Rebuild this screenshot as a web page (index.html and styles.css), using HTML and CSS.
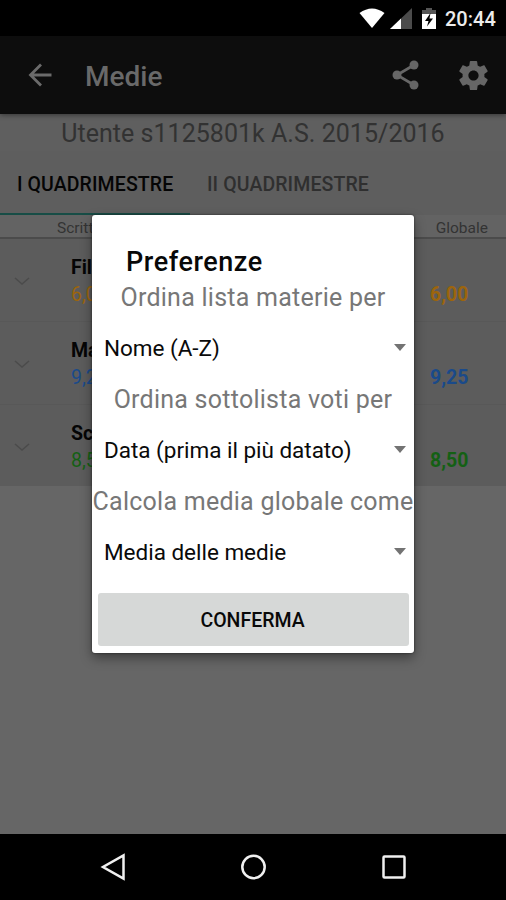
FILE: index.html
```html
<!DOCTYPE html>
<html lang="it">
<head>
<meta charset="utf-8">
<title>Medie</title>
<link rel="stylesheet" href="styles.css">
</head>
<body>
<div class="screen">
  <div class="status">
    <svg class="wifi" width="26" height="21" viewBox="0 0 26 21"><path d="M0.500 5Q13-4 25.500 5L13 20Z" fill="#fff"/></svg>
    <svg class="signal" width="22" height="21" viewBox="0 0 22 21"><path d="M0 21L22 0V21Z" fill="#4b4b4b"/><path d="M0 21L11 10.500V21Z" fill="#fff"/></svg>
    <svg class="battery" width="14" height="21" viewBox="0 0 14 21"><path d="M0 2H4V0H10V2H14V7H0Z" fill="#555"/><path d="M0 6H14V21H0Z" fill="#fff"/><path d="M8.500 5L3 13H6.500L5 18.500L11 10.500H7.500Z" fill="#000"/></svg>
    <span class="clock">20:44</span>
  </div>
  <header class="appbar">
    <svg class="back" width="24" height="24" viewBox="0 0 24 24" fill="none" stroke="#6b6b6b" stroke-width="2.800"><path d="M23.500 12H3M13 1.500L2.500 12L13 22.500"/></svg>
    <h1 class="title">Medie</h1>
    <svg class="share" width="28" height="30" viewBox="0 0 28 30" fill="#666"><path d="M22 5L5 15L22 25" fill="none" stroke="#666" stroke-width="2.700"/><circle cx="22" cy="5" r="4.500"/><circle cx="5" cy="15" r="4.500"/><circle cx="22" cy="25" r="4.500"/></svg>
    <svg class="gear" width="35" height="35" viewBox="0 0 24 24" fill="#666"><path d="M19.430 12.980c.04-.32.070-.64.070-.98s-.03-.66-.07-.98l2.110-1.650c.19-.15.240-.42.120-.64l-2-3.460c-.12-.22-.39-.3-.61-.22l-2.490 1c-.52-.4-1.080-.73-1.690-.98l-.38-2.650C14.460 2.180 14.250 2 14 2h-4c-.25 0-.46.18-.49.42l-.38 2.650c-.61.25-1.170.59-1.690.98l-2.490-1c-.23-.09-.49 0-.61.22l-2 3.460c-.13.22-.07.49.12.64l2.110 1.650c-.04.32-.07.65-.07.98s.03.66.07.98l-2.110 1.650c-.19.15-.24.42-.12.64l2 3.460c.12.22.39.3.61.22l2.490-1c.52.4 1.080.73 1.690.98l.38 2.650c.03.24.24.42.49.42h4c.25 0 .46-.18.49-.42l.38-2.650c.61-.25 1.170-.59 1.690-.98l2.490 1c.23.09.49 0 .61-.22l2-3.460c.12-.22.07-.49-.12-.64l-2.110-1.650zM12 15.500c-1.930 0-3.500-1.570-3.500-3.500s1.570-3.500 3.500-3.500 3.500 1.570 3.500 3.500-1.570 3.500-3.500 3.500z"/></svg>
  </header>
  <main class="content">
    <div class="user"><span>Utente s1125801k A.S. 2015/2016</span></div>
    <nav class="tabs"><div class="tab active"><span>I QUADRIMESTRE</span></div><div class="tab"><span>II QUADRIMESTRE</span></div></nav>
    <div class="columns"><span>Scritt</span><span>Globale</span></div>
    <div class="list">
      <div class="row"><svg class="chevron" width="16" height="9" viewBox="0 0 16 9"><path d="M1 1L8 7L15 1"/></svg><div class="subject"><b>Fil</b><span class="orange">6,0</span></div><strong class="orange">6,00</strong></div>
      <div class="row"><svg class="chevron" width="16" height="9" viewBox="0 0 16 9"><path d="M1 1L8 7L15 1"/></svg><div class="subject"><b>Ma</b><span class="blue">9,2</span></div><strong class="blue">9,25</strong></div>
      <div class="row"><svg class="chevron" width="16" height="9" viewBox="0 0 16 9"><path d="M1 1L8 7L15 1"/></svg><div class="subject"><b>Sc</b><span class="green">8,5</span></div><strong class="green">8,50</strong></div>
    </div>
  </main>
  <footer class="navbar">
    <svg width="28" height="28" viewBox="0 0 28 28"><path d="M25.500 2.500V25.500L5 14Z"/></svg>
    <svg width="28" height="28" viewBox="0 0 28 28"><circle cx="14.500" cy="14" r="11.200"/></svg>
    <svg width="28" height="28" viewBox="0 0 28 28"><rect x="3.500" y="3.500" width="21" height="21" rx="1"/></svg>
  </footer>
  <section class="dialog">
    <h2 class="heading"><span>Preferenze</span></h2>
    <div class="label"><span>Ordina lista materie per</span></div>
    <div class="select"><span>Nome (A-Z)</span><i class="arrow"></i></div>
    <div class="label"><span>Ordina sottolista voti per</span></div>
    <div class="select"><span>Data (prima il più datato)</span><i class="arrow"></i></div>
    <div class="label"><span>Calcola media globale come</span></div>
    <div class="select"><span>Media delle medie</span><i class="arrow"></i></div>
    <button class="confirm"><span>CONFERMA</span></button>
  </section>
</div>
</body>
</html>
```
FILE: styles.css
```css
* { box-sizing: border-box; }
body { margin: 0; font-family: Roboto, sans-serif; }
.screen { position: relative; width: 506px; height: 900px; display: flex; flex-direction: column; overflow: hidden; background: #666; }
.status { height: 36px; background: #000; display: flex; align-items: flex-start; padding-left: 359px; }
.status svg { margin-top: 8px; flex: none; }
.signal { margin-left: 5px; }
.battery { margin-left: 10px; }
.clock { margin-left: 9px; color: #ececec; font-size: 20px; font-weight: 500; line-height: 38px; white-space: nowrap; }
.appbar { height: 78px; background: #0d0d0d; display: flex; align-items: center; padding-left: 28px; box-shadow: 0 1px 5px rgba(0,0,0,.45); z-index: 1; }
.title { margin: 3px 0 0 33px; width: 307px; color: #696969; font-size: 28px; font-weight: 500; line-height: 36px; }
.gear { margin-left: 36px; }
.content { flex: 1; }
.user { height: 37px; background: #5f5f5f; color: #323232; font-size: 25px; line-height: 40px; letter-spacing: .03px; text-align: center; white-space: nowrap; }
.tabs { height: 64px; display: flex; background: #5e5e5e; white-space: nowrap; }
.tab { width: 190px; padding-left: 17px; font-size: 19.500px; font-weight: 500; line-height: 67px; letter-spacing: .1px; color: #2f2f2f; }
.tab.active { height: 64px; color: #050505; border-bottom: 2px solid #174d46; }
.columns { height: 24px; display: flex; justify-content: space-between; padding: 0 18px 0 57px; border-bottom: 2px solid #4b4b4b; background: #636363; color: #333; font-size: 15.500px; line-height: 26px; }
.list { background: #5c5c5c; height: 247px; }
.row { height: 83px; display: flex; border-bottom: 1px solid #585858; padding-left: 14px; }
.row:last-child { height: 82px; border-bottom: 0; }
.chevron { margin-top: 38px; fill: none; stroke: #4b4b4b; stroke-width: 1.500; }
.subject { width: 359px; margin-left: 41px; padding-top: 15px; font-size: 19.500px; line-height: 27px; display: flex; flex-direction: column; }
.subject b { color: #050505; }
.row strong { font-size: 19.500px; line-height: 27px; padding-top: 42px; }
.orange { color: #9c650c; }
.blue { color: #1a4a8a; }
.green { color: #146014; }
.navbar { height: 66px; background: #000; display: flex; padding: 19px 98px 0; justify-content: space-between; }
.navbar svg { fill: none; stroke: #f0f0f0; stroke-width: 2.500; }
.dialog { position: absolute; z-index: 2; left: 92px; top: 215px; width: 322px; height: 438px; background: #fff; border-radius: 3px; box-shadow: 0 5px 12px rgba(0,0,0,.4), 0 0 2px #222; padding-top: 28px; display: flex; flex-direction: column; }
.heading { margin: 0; padding-left: 34px; height: 37px; font-size: 27px; font-weight: 500; line-height: 39px; letter-spacing: .55px; color: #080808; }
.label { height: 35px; display: flex; justify-content: center; font-size: 25px; line-height: 36px; letter-spacing: .25px; color: #777; white-space: nowrap; }
.select { height: 67px; display: flex; justify-content: space-between; align-items: center; padding: 0 8px 0 12px; font-size: 22.500px; color: #0a0a0a; white-space: nowrap; }
.select span { margin-top: -2px; letter-spacing: -.02px; }
.arrow { border: solid transparent; border-width: 7px 6.500px 0; border-top-color: #737373; margin-top: -3px; }
.confirm { margin: 7px 5px 0 6px; height: 53px; border: 0; border-radius: 3px; background: #d6d8d7; color: #090909; font: 500 19.500px/55px Roboto, sans-serif; padding: 0 2px 0 0; }
```
